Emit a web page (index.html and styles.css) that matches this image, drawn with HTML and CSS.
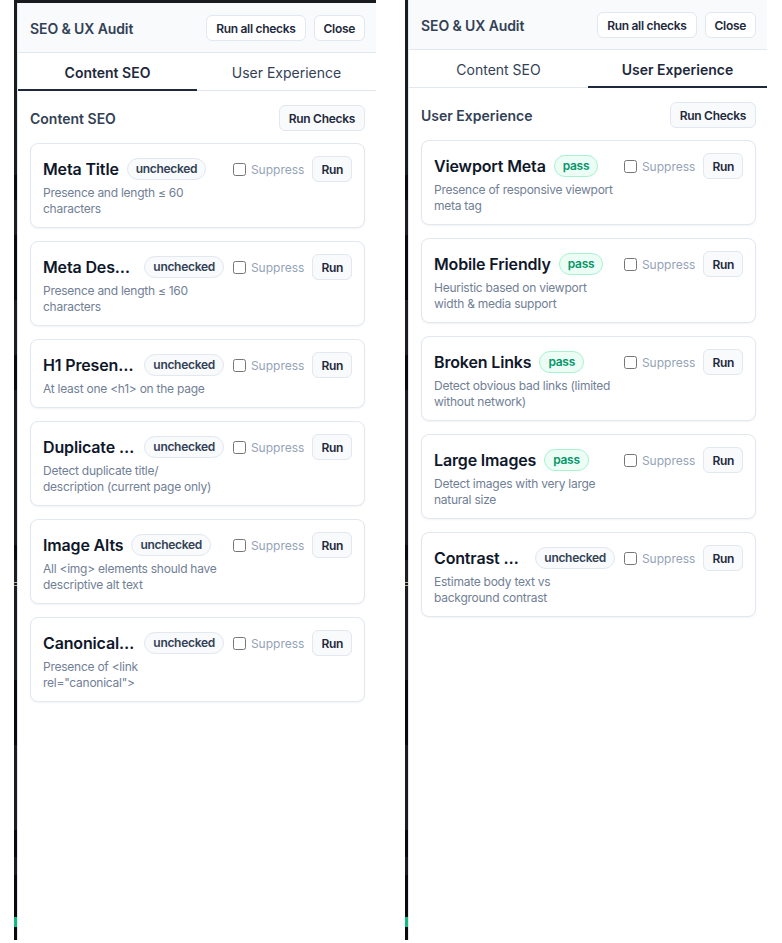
FILE: index.html
```html
<!DOCTYPE html>
<html lang="en">
<head>
<meta charset="utf-8">
<title>SEO &amp; UX Audit</title>
<link rel="stylesheet" href="styles.css">
</head>
<body>
<div class="stage">
  <div class="frame frame-left">
    <span class="strip-mark mark-a"></span>
    <span class="strip-mark mark-b"></span>
    <aside class="panel">
      <header class="panel-header">
        <h1 class="panel-title">SEO &amp; UX Audit</h1>
        <div class="header-actions">
          <button class="btn">Run all checks</button>
          <button class="btn">Close</button>
        </div>
      </header>
      <nav class="tabs">
        <div class="tab active">Content SEO</div>
        <div class="tab">User Experience</div>
      </nav>
      <section class="panel-body">
        <div class="section-head">
          <h2 class="section-title">Content SEO</h2>
          <button class="btn btn-soft">Run Checks</button>
        </div>
        <div class="cards">
          <div class="card">
            <div class="card-main">
              <div class="card-top"><span class="card-title">Meta Title</span><span class="badge">unchecked</span></div>
              <p class="card-desc">Presence and length ≤ 60 characters</p>
            </div>
            <div class="card-actions"><label class="suppress"><input type="checkbox"><span>Suppress</span></label><button class="btn btn-soft btn-run">Run</button></div>
          </div>
          <div class="card">
            <div class="card-main">
              <div class="card-top"><span class="card-title">Meta Description</span><span class="badge">unchecked</span></div>
              <p class="card-desc">Presence and length ≤ 160 characters</p>
            </div>
            <div class="card-actions"><label class="suppress"><input type="checkbox"><span>Suppress</span></label><button class="btn btn-soft btn-run">Run</button></div>
          </div>
          <div class="card">
            <div class="card-main">
              <div class="card-top"><span class="card-title">H1 Presence</span><span class="badge">unchecked</span></div>
              <p class="card-desc">At least one &lt;h1&gt; on the page</p>
            </div>
            <div class="card-actions"><label class="suppress"><input type="checkbox"><span>Suppress</span></label><button class="btn btn-soft btn-run">Run</button></div>
          </div>
          <div class="card">
            <div class="card-main">
              <div class="card-top"><span class="card-title">Duplicate Metadata</span><span class="badge">unchecked</span></div>
              <p class="card-desc">Detect duplicate title/<br>description (current page only)</p>
            </div>
            <div class="card-actions"><label class="suppress"><input type="checkbox"><span>Suppress</span></label><button class="btn btn-soft btn-run">Run</button></div>
          </div>
          <div class="card">
            <div class="card-main">
              <div class="card-top"><span class="card-title">Image Alts</span><span class="badge">unchecked</span></div>
              <p class="card-desc">All &lt;img&gt; elements should have descriptive alt text</p>
            </div>
            <div class="card-actions"><label class="suppress"><input type="checkbox"><span>Suppress</span></label><button class="btn btn-soft btn-run">Run</button></div>
          </div>
          <div class="card">
            <div class="card-main">
              <div class="card-top"><span class="card-title">Canonical URL</span><span class="badge">unchecked</span></div>
              <p class="card-desc">Presence of &lt;link rel="canonical"&gt;</p>
            </div>
            <div class="card-actions"><label class="suppress"><input type="checkbox"><span>Suppress</span></label><button class="btn btn-soft btn-run">Run</button></div>
          </div>
        </div>
      </section>
    </aside>
  </div>

  <div class="frame frame-right">
    <span class="strip-mark mark-a"></span>
    <span class="strip-mark mark-b"></span>
    <aside class="panel">
      <header class="panel-header">
        <h1 class="panel-title">SEO &amp; UX Audit</h1>
        <div class="header-actions">
          <button class="btn">Run all checks</button>
          <button class="btn">Close</button>
        </div>
      </header>
      <nav class="tabs">
        <div class="tab">Content SEO</div>
        <div class="tab active">User Experience</div>
      </nav>
      <section class="panel-body">
        <div class="section-head">
          <h2 class="section-title">User Experience</h2>
          <button class="btn btn-soft">Run Checks</button>
        </div>
        <div class="cards">
          <div class="card">
            <div class="card-main">
              <div class="card-top"><span class="card-title">Viewport Meta</span><span class="badge badge-pass">pass</span></div>
              <p class="card-desc">Presence of responsive viewport meta tag</p>
            </div>
            <div class="card-actions"><label class="suppress"><input type="checkbox"><span>Suppress</span></label><button class="btn btn-soft btn-run">Run</button></div>
          </div>
          <div class="card">
            <div class="card-main">
              <div class="card-top"><span class="card-title">Mobile Friendly</span><span class="badge badge-pass">pass</span></div>
              <p class="card-desc">Heuristic based on viewport width &amp; media support</p>
            </div>
            <div class="card-actions"><label class="suppress"><input type="checkbox"><span>Suppress</span></label><button class="btn btn-soft btn-run">Run</button></div>
          </div>
          <div class="card">
            <div class="card-main">
              <div class="card-top"><span class="card-title">Broken Links</span><span class="badge badge-pass">pass</span></div>
              <p class="card-desc">Detect obvious bad links (limited without network)</p>
            </div>
            <div class="card-actions"><label class="suppress"><input type="checkbox"><span>Suppress</span></label><button class="btn btn-soft btn-run">Run</button></div>
          </div>
          <div class="card">
            <div class="card-main">
              <div class="card-top"><span class="card-title">Large Images</span><span class="badge badge-pass">pass</span></div>
              <p class="card-desc">Detect images with very large natural size</p>
            </div>
            <div class="card-actions"><label class="suppress"><input type="checkbox"><span>Suppress</span></label><button class="btn btn-soft btn-run">Run</button></div>
          </div>
          <div class="card">
            <div class="card-main">
              <div class="card-top"><span class="card-title">Contrast Ratio</span><span class="badge">unchecked</span></div>
              <p class="card-desc">Estimate body text vs background contrast</p>
            </div>
            <div class="card-actions"><label class="suppress"><input type="checkbox"><span>Suppress</span></label><button class="btn btn-soft btn-run">Run</button></div>
          </div>
        </div>
      </section>
    </aside>
  </div>
</div>
</body>
</html>
```

FILE: styles.css
```css
* { box-sizing: border-box; }

html, body {
  margin: 0;
  background: #ffffff;
}

body {
  font-family: Inter, "Noto Sans", "Liberation Sans", sans-serif;
  color: #1e293b;
  -webkit-font-smoothing: antialiased;
}

.stage {
  display: flex;
  align-items: flex-start;
  height: 943px;
  overflow: hidden;
}

.frame {
  position: relative;
  display: flex;
  flex: none;
  width: 362px;
  height: 940px;
  background: linear-gradient(to bottom,
    #1a1b1e 0, #1a1b1e 175px,
    #0b0b0d 175px, #0b0b0d 200px,
    #1d1d20 200px, #1d1d20 235px,
    #0b0b0d 235px, #0b0b0d 300px,
    #1d1d20 300px, #1d1d20 355px,
    #0a0a0c 355px, #0a0a0c 390px,
    #1b1b1e 390px, #1b1b1e 545px,
    #0b0b0d 545px, #0b0b0d 560px,
    #1d1d20 560px, #1d1d20 600px,
    #1b1b1e 600px, #1b1b1e 680px,
    #0a0a0c 680px, #0a0a0c 745px,
    #1c1c1f 745px, #1c1c1f 830px,
    #0a0a0c 830px, #0a0a0c 857px,
    #1b1b1e 857px, #1b1b1e 875px,
    #0a0a0c 875px);
}

.frame-left {
  margin-left: 14px;
  padding: 3px 0 0 3px;
}

.frame-right {
  margin-left: 29px;
  padding-left: 3px;
}

.strip-mark {
  position: absolute;
  left: 0;
  width: 3px;
}

.mark-a {
  top: 582px;
  height: 6px;
  background: repeating-linear-gradient(to bottom, #b9a98a 0 1px, transparent 1px 3px);
}

.mark-b {
  top: 917px;
  height: 8px;
  background: #12b981;
  box-shadow: 0 2px 0 #12b981;
}

.panel {
  flex: 1;
  min-width: 0;
  overflow: hidden;
  display: flex;
  flex-direction: column;
  background: #ffffff;
  border-left: 1px solid #e2e8f0;
}

/* header */
.panel-header {
  display: flex;
  align-items: center;
  justify-content: space-between;
  padding: 12px 11px 11px 12px;
  background: #f8fafc;
  border-bottom: 1px solid #e2e8f0;
}

.panel-title {
  margin: 0;
  font-size: 14px;
  font-weight: 600;
  color: #334155;
  letter-spacing: -0.1px;
}

.header-actions {
  display: flex;
  gap: 8px;
}

.btn {
  height: 26px;
  padding: 0 9px;
  font-family: inherit;
  font-size: 12px;
  font-weight: 600;
  letter-spacing: -0.3px;
  color: #1e293b;
  background: #ffffff;
  border: 1px solid #e2e8f0;
  border-radius: 6px;
  cursor: pointer;
}

.btn-soft {
  background: #f8fafc;
}

.btn-run {
  padding: 0 8px;
}

/* tabs */
.tabs {
  display: flex;
  border-bottom: 1px solid #e2e8f0;
}

.tab {
  flex: 1;
  text-align: center;
  padding: 11px 0 8px;
  font-size: 14px;
  line-height: 17px;
  color: #334155;
  border-bottom: 2px solid transparent;
  margin-bottom: -1px;
}

.tab.active {
  font-weight: 600;
  color: #1e293b;
  border-bottom-color: #1e293b;
}

/* body */
.panel-body {
  padding: 14px 11px 12px 12px;
}

.section-head {
  display: flex;
  align-items: center;
  justify-content: space-between;
  margin-bottom: 12px;
}

.section-title {
  margin: 0;
  font-size: 14px;
  font-weight: 600;
  color: #334155;
}

.cards {
  display: flex;
  flex-direction: column;
  gap: 13px;
}

.card {
  display: flex;
  align-items: flex-start;
  gap: 9px;
  padding: 12px 12px 10px;
  background: #ffffff;
  border: 1px solid #e2e8f0;
  border-radius: 8px;
  box-shadow: 0 1px 2px rgba(15, 23, 42, 0.05);
}

.card-main {
  flex: 1;
  min-width: 0;
}

.card-top {
  display: flex;
  align-items: center;
  gap: 8px;
  height: 26px;
}

.card-title {
  min-width: 0;
  overflow: hidden;
  white-space: nowrap;
  text-overflow: ellipsis;
  font-size: 16px;
  font-weight: 600;
  color: #0f172a;
  letter-spacing: -0.15px;
}

.badge {
  flex: none;
  padding: 2px 8px;
  font-size: 12px;
  line-height: 16px;
  font-weight: 600;
  letter-spacing: -0.3px;
  color: #334155;
  background: #f8fafc;
  border: 1px solid #e2e8f0;
  border-radius: 999px;
}

.badge-pass {
  color: #059669;
  background: #ecfdf5;
  border-color: #a7f3d0;
}

.card-desc {
  margin: 3px 0 0;
  font-size: 12px;
  line-height: 16px;
  letter-spacing: -0.25px;
  color: #718096;
}

.card-actions {
  flex: none;
  display: flex;
  align-items: center;
  gap: 8px;
}

.suppress {
  display: flex;
  align-items: center;
  gap: 5px;
  font-size: 12px;
  color: #94a3b8;
}

.suppress input {
  width: 13px;
  height: 13px;
  margin: 0;
}
```
